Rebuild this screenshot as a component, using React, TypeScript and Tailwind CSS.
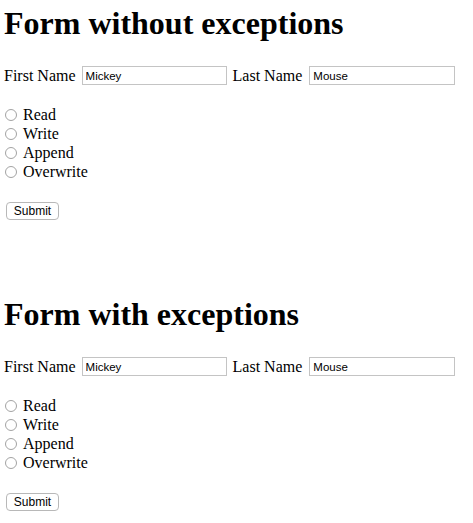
import { useState } from "react";

const options = ["Read", "Write", "Append", "Overwrite"];

function FormBlock({ title, name }: { title: string; name: string }) {
  const [first, setFirst] = useState("Mickey");
  const [last, setLast] = useState("Mouse");
  const [mode, setMode] = useState<string | null>(null);

  return (
    <div className="pb-[69px] last:pb-0">
      <h1 className="mt-[5px] text-[32px] font-bold leading-[37px] text-black">{title}</h1>

      {/* nomes */}
      <div className="mt-[24px] flex h-[19px] items-center text-[16px] leading-[19px]">
        <label className="mr-[6px]">First Name</label>
        <input
          value={first}
          onChange={(e) => setFirst(e.target.value)}
          className="h-[19px] w-[145px] border border-[#c4c4c4] bg-white px-[3px] font-['Liberation_Sans',Arial,sans-serif] text-[11.5px] leading-[17px] text-black outline-none"
        />
        <label className="ml-[6px] mr-[7px]">Last Name</label>
        <input
          value={last}
          onChange={(e) => setLast(e.target.value)}
          className="h-[19px] w-[146px] border border-[#c4c4c4] bg-white px-[3px] font-['Liberation_Sans',Arial,sans-serif] text-[11.5px] leading-[17px] text-black outline-none"
        />
      </div>

      {/* opções */}
      <div className="mt-[20px] flex flex-col">
        {options.map((o) => (
          <label key={o} className="flex h-[19px] items-center text-[16px] leading-[19px]">
            <input
              type="radio"
              name={name}
              checked={mode === o}
              onChange={() => setMode(o)}
              className="ml-px mr-[6px] h-[12px] w-[12px] appearance-none rounded-full border border-[#a3a3a3] bg-white checked:border-[4px] checked:border-[#3b82f6]"
            />
            {o}
          </label>
        ))}
      </div>

      <button className="ml-[2px] mt-[21px] h-[18px] w-[53px] rounded-[4px] border border-[#b8b8b8] bg-white font-['Liberation_Sans',Arial,sans-serif] text-[12px] leading-[16px] text-black">
        Submit
      </button>
    </div>
  );
}

export default function App() {
  return (
    <div className="min-h-screen bg-white px-1 font-['Liberation_Serif','Times_New_Roman',serif] text-black">
      <FormBlock title="Form without exceptions" name="perm1" />
      <FormBlock title="Form with exceptions" name="perm2" />
    </div>
  );
}
